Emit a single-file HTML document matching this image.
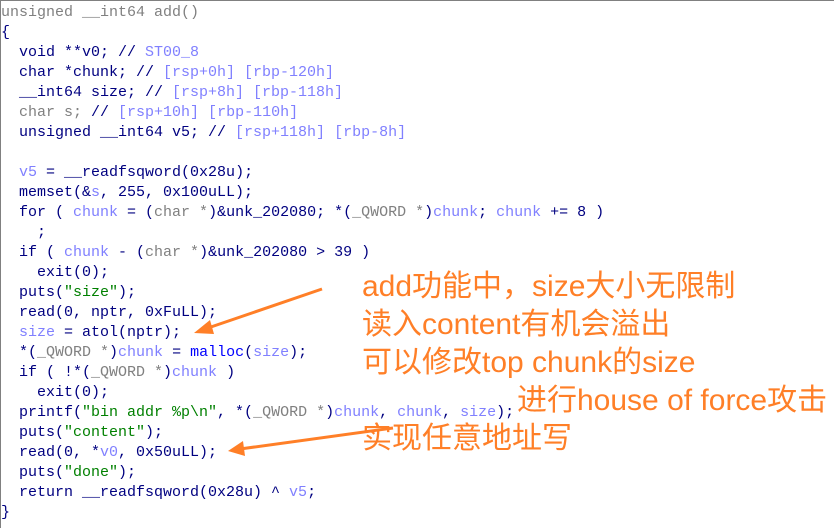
<!DOCTYPE html>
<html><head><meta charset="utf-8"><style>
html,body{margin:0;padding:0;background:#fff;width:834px;height:528px;overflow:hidden;position:relative}
#f{position:absolute;left:0;top:0;width:834px;height:528px;border-top:1px solid #808080;border-left:1px solid #808080;box-sizing:border-box}
pre{position:absolute;left:1px;top:3px;margin:0;font-family:"Liberation Mono",monospace;font-size:15px;line-height:20px;color:#000080}
.g{color:#808080}.c{color:#8080ff}.s{color:#008000}.b{color:#0000ff}.v{color:#8080ff}
.a{position:absolute;font-family:"Liberation Sans","Noto Sans CJK SC",sans-serif;font-size:30px;color:#ff7f27;white-space:nowrap;line-height:32px}
</style></head><body><div id="f"></div>
<pre><span class="g">unsigned __int64 add()</span>
{
  void **v0; // <span class="c">ST00_8</span>
  char *chunk; // <span class="c">[rsp+0h] [rbp-120h]</span>
  __int64 size; // <span class="c">[rsp+8h] [rbp-118h]</span>
  <span class="g">char s;</span> // <span class="c">[rsp+10h] [rbp-110h]</span>
  unsigned __int64 v5; // <span class="c">[rsp+118h] [rbp-8h]</span>

  <span class="v">v5</span> = __readfsqword(0x28u);
  memset(&amp;<span class="v">s</span>, 255, 0x100uLL);
  for ( <span class="v">chunk</span> = (<span class="g">char *</span>)&amp;unk_202080; *(<span class="g">_QWORD *</span>)<span class="v">chunk</span>; <span class="v">chunk</span> += 8 )
    ;
  if ( <span class="v">chunk</span> - (<span class="g">char *</span>)&amp;unk_202080 &gt; 39 )
    exit(0);
  puts(<span class="s">"size"</span>);
  read(0, nptr, 0xFuLL);
  <span class="v">size</span> = atol(nptr);
  *(<span class="g">_QWORD *</span>)<span class="v">chunk</span> = <span class="b">malloc</span>(<span class="v">size</span>);
  if ( !*(<span class="g">_QWORD *</span>)<span class="v">chunk</span> )
    exit(0);
  printf(<span class="s">"bin addr %p\n"</span>, *(<span class="g">_QWORD *</span>)<span class="v">chunk</span>, <span class="v">chunk</span>, <span class="v">size</span>);
  puts(<span class="s">"content"</span>);
  read(0, *<span class="v">v0</span>, 0x50uLL);
  puts(<span class="s">"done"</span>);
  return __readfsqword(0x28u) ^ <span class="v">v5</span>;
}</pre>
<div class="a" style="left:362px;top:271px">add功能中，size大小无限制</div>
<div class="a" style="left:362px;top:309px">读入content有机会溢出</div>
<div class="a" style="left:362px;top:347px">可以修改top chunk的size</div>
<div class="a" style="left:517px;top:385px">进行house of force攻击</div>
<div class="a" style="left:362px;top:423px">实现任意地址写</div>
<svg style="position:absolute;left:0;top:0" width="834" height="528">
<g stroke="#ff7f27" stroke-width="3" fill="#ff7f27">
<line x1="322" y1="289" x2="205" y2="329"/>
<polygon points="194,333 210,320 214,334" stroke="none"/>
<line x1="393" y1="428" x2="240" y2="449"/>
<polygon points="228,451 243,441 245,456" stroke="none"/>
</g></svg>
</body></html>
